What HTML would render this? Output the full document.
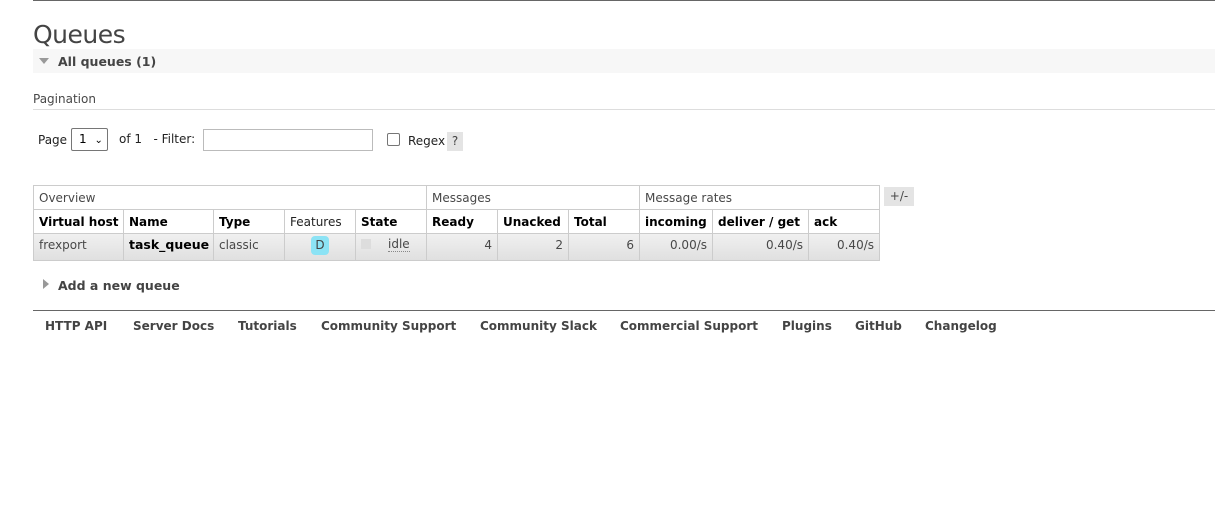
<!DOCTYPE html>
<html><head><meta charset="utf-8"><style>
body{margin:0;width:1215px;height:532px;background:#fff;font-family:"DejaVu Sans",Verdana,sans-serif;color:#484848;position:relative;overflow:hidden}
.a{position:absolute;white-space:nowrap}
.c{position:absolute;box-sizing:border-box;border:1px solid #ccc;font-size:12px;padding:5px 5px 3px;white-space:nowrap;overflow:hidden;line-height:14px}
.h{font-weight:bold;color:#000}
.d{background:linear-gradient(#f0f0f0,#e0e0e0);color:#484848;padding-top:4px}
.r{text-align:right}
.f{font-size:12px;font-weight:bold;color:#444;top:319px}
</style></head><body>
<div class="a" style="left:33px;top:0;width:1182px;height:1px;background:#666"></div>
<div class="a" style="left:33px;top:20px;font-size:25px;color:#444;font-family:'DejaVu Sans',sans-serif;letter-spacing:-0.5px">Queues</div>
<div class="a" style="left:33px;top:49px;width:1182px;height:24px;background:#f7f7f7"></div>
<div class="a" style="left:39px;top:58px;width:0;height:0;border-left:5px solid transparent;border-right:5px solid transparent;border-top:6px solid #999"></div>
<div class="a" style="left:58px;top:54px;font-size:12.5px;font-weight:bold;color:#444">All queues (1)</div>
<div class="a" style="left:33px;top:92px;font-size:12px;color:#484848">Pagination</div>
<div class="a" style="left:33px;top:109px;width:1182px;height:1px;background:#ddd"></div>
<div class="a" style="left:38px;top:133px;font-size:12px;color:#222">Page</div>
<div class="a" style="left:71px;top:128px;width:37px;height:23px;box-sizing:border-box;border:1px solid #767676;border-radius:2px;font-size:12px;color:#000;padding:3px 0 0 7px">1 <span style="font-size:10px;margin-left:4px">&#8964;</span></div>
<div class="a" style="left:119px;top:132px;font-size:12px;color:#222">of 1 &nbsp; - Filter:</div>
<div class="a" style="left:203px;top:129px;width:170px;height:22px;box-sizing:border-box;border:1px solid #bbb"></div>
<div class="a" style="left:387px;top:133px;width:13px;height:13px;box-sizing:border-box;border:1px solid #767676;border-radius:2px"></div>
<div class="a" style="left:408px;top:134px;font-size:12px;color:#222">Regex</div>
<div class="a" style="left:447px;top:132px;width:16px;height:19px;background:#e4e4e4;font-size:12px;text-align:center;line-height:19px;color:#444">?</div>

<div class="c" style="left:33px;top:185px;width:394px;height:25px">Overview</div>
<div class="c" style="left:426px;top:185px;width:214px;height:25px">Messages</div>
<div class="c" style="left:639px;top:185px;width:241px;height:25px">Message rates</div>
<div class="a" style="left:884px;top:187px;width:30px;height:19px;background:#e4e4e4;font-size:12px;text-align:center;line-height:19px">+/-</div>

<div class="c h" style="left:33px;top:209px;width:91px;height:25px">Virtual host</div>
<div class="c h" style="left:123px;top:209px;width:91px;height:25px">Name</div>
<div class="c h" style="left:213px;top:209px;width:72px;height:25px">Type</div>
<div class="c" style="left:284px;top:209px;width:72px;height:25px;color:#222">Features</div>
<div class="c h" style="left:355px;top:209px;width:72px;height:25px">State</div>
<div class="c h" style="left:426px;top:209px;width:72px;height:25px">Ready</div>
<div class="c h" style="left:497px;top:209px;width:72px;height:25px">Unacked</div>
<div class="c h" style="left:568px;top:209px;width:72px;height:25px">Total</div>
<div class="c h" style="left:639px;top:209px;width:74px;height:25px">incoming</div>
<div class="c h" style="left:712px;top:209px;width:97px;height:25px">deliver / get</div>
<div class="c h" style="left:808px;top:209px;width:72px;height:25px">ack</div>

<div class="c d" style="left:33px;top:233px;width:91px;height:28px">frexport</div>
<div class="c d" style="left:123px;top:233px;width:91px;height:28px;font-weight:bold;color:#000;font-size:12.5px">task_queue</div>
<div class="c d" style="left:213px;top:233px;width:72px;height:28px">classic</div>
<div class="c d" style="left:284px;top:233px;width:72px;height:28px"></div>
<div class="a" style="left:311px;top:236px;width:18px;height:19px;background:#8ce3f5;border-radius:4px;font-size:12px;text-align:center;line-height:19px;color:#444">D</div>
<div class="c d" style="left:355px;top:233px;width:72px;height:28px"></div>
<div class="a" style="left:361px;top:239px;width:10px;height:10px;background:#ddd"></div>
<div class="a" style="left:388px;top:237px;font-size:12px;border-bottom:1px dotted #888;line-height:14px">idle</div>
<div class="c d r" style="left:426px;top:233px;width:72px;height:28px">4</div>
<div class="c d r" style="left:497px;top:233px;width:72px;height:28px">2</div>
<div class="c d r" style="left:568px;top:233px;width:72px;height:28px">6</div>
<div class="c d r" style="left:639px;top:233px;width:74px;height:28px">0.00/s</div>
<div class="c d r" style="left:712px;top:233px;width:97px;height:28px">0.40/s</div>
<div class="c d r" style="left:808px;top:233px;width:72px;height:28px">0.40/s</div>

<div class="a" style="left:43px;top:279px;width:0;height:0;border-top:5px solid transparent;border-bottom:5px solid transparent;border-left:6px solid #999"></div>
<div class="a" style="left:58px;top:278px;font-size:12.5px;font-weight:bold;color:#444">Add a new queue</div>

<div class="a" style="left:33px;top:310px;width:1182px;height:1px;background:#666"></div>
<div class="a f" style="left:45px">HTTP API</div>
<div class="a f" style="left:133px">Server Docs</div>
<div class="a f" style="left:238px">Tutorials</div>
<div class="a f" style="left:321px">Community Support</div>
<div class="a f" style="left:480px">Community Slack</div>
<div class="a f" style="left:620px">Commercial Support</div>
<div class="a f" style="left:782px">Plugins</div>
<div class="a f" style="left:855px">GitHub</div>
<div class="a f" style="left:925px">Changelog</div>
</body></html>
